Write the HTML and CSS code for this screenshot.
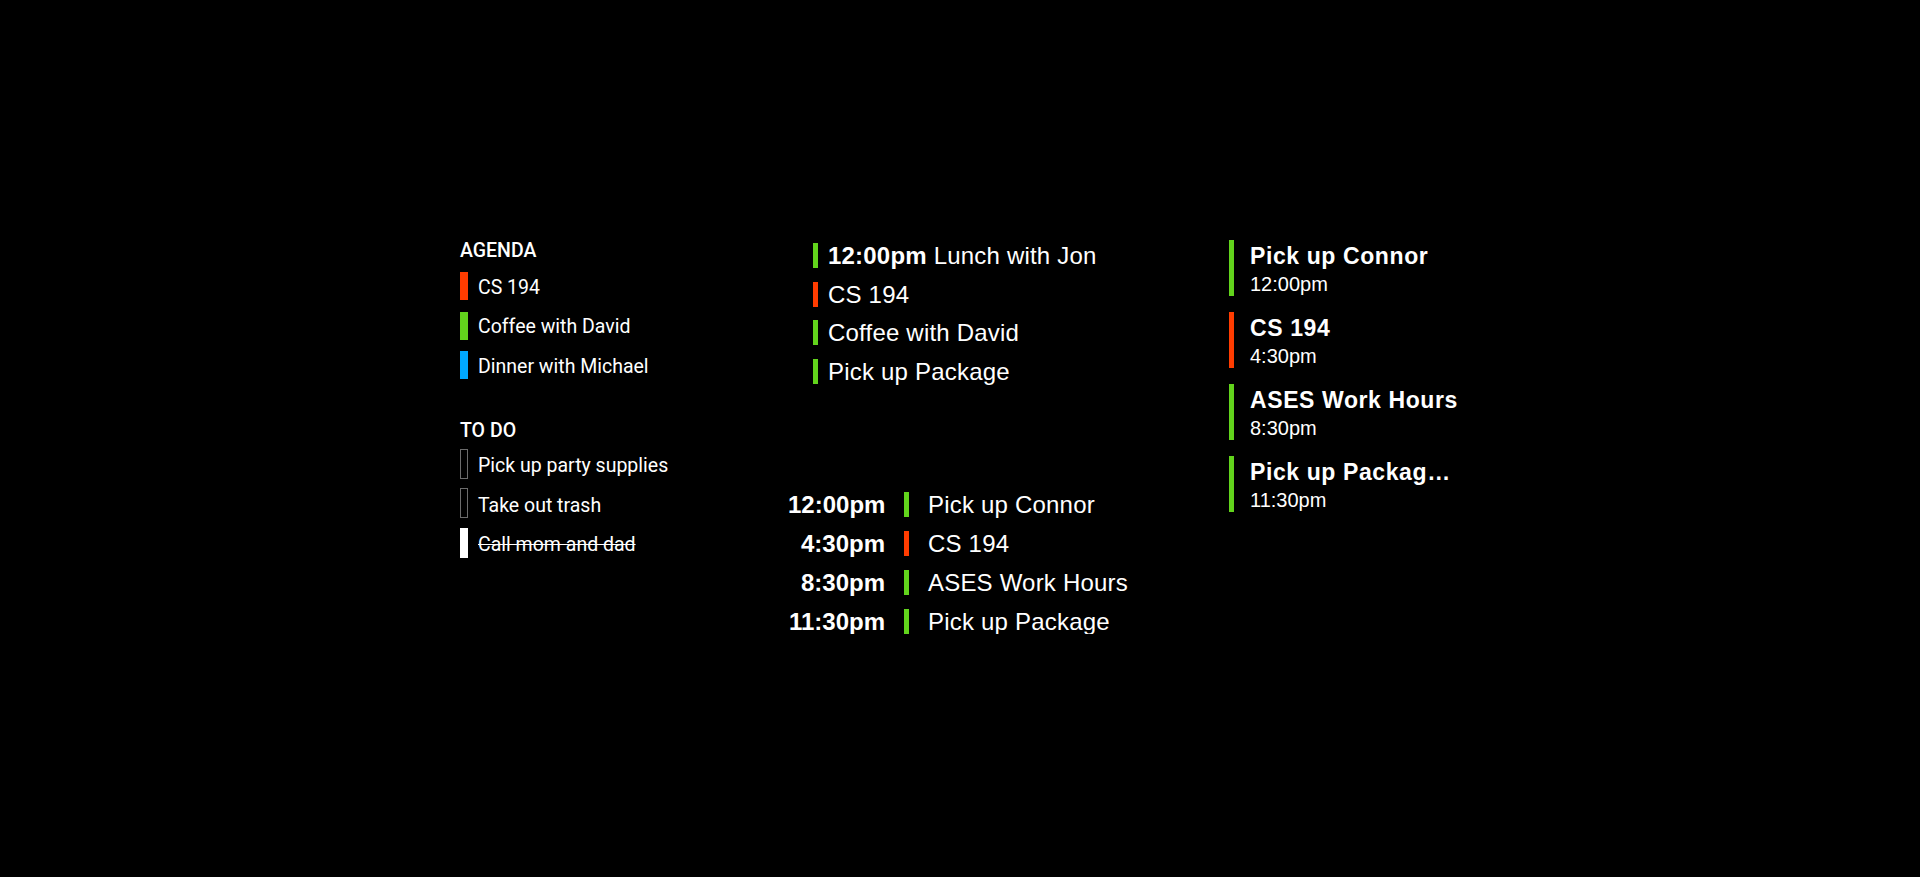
FILE: index.html
```html
<!DOCTYPE html>
<html>
	<head>
		<meta charset="utf-8">
		<link rel="stylesheet" href="styles.css">
		<title>Watch glances</title>
	</head>
	<body>
		<div class="screen">
			<div class="col col-lists">
				<h2 class="heading">AGENDA</h2>
				<ul class="list">
					<li class="item"><span class="bar red"></span><span class="label">CS 194</span></li>
					<li class="item"><span class="bar green"></span><span class="label">Coffee with David</span></li>
					<li class="item"><span class="bar blue"></span><span class="label">Dinner with Michael</span></li>
				</ul>
				<h2 class="heading todo-heading">TO DO</h2>
				<ul class="list todo">
					<li class="item"><span class="box"></span><span class="label">Pick up party supplies</span></li>
					<li class="item"><span class="box"></span><span class="label">Take out trash</span></li>
					<li class="item done"><span class="box checked"></span><span class="label">Call mom and dad</span></li>
				</ul>
			</div>
			<div class="col col-day">
				<ul class="events">
					<li class="event"><span class="tick green"></span><span><b>12:00pm</b> Lunch with Jon</span></li>
					<li class="event"><span class="tick red"></span><span>CS 194</span></li>
					<li class="event"><span class="tick green"></span><span>Coffee with David</span></li>
					<li class="event"><span class="tick green"></span><span>Pick up Package</span></li>
				</ul>
				<div class="timeline">
					<span class="time">12:00pm</span><span class="tick green"></span><span class="what">Pick up Connor</span>
					<span class="time">4:30pm</span><span class="tick red"></span><span class="what">CS 194</span>
					<span class="time">8:30pm</span><span class="tick green"></span><span class="what">ASES Work Hours</span>
					<span class="time">11:30pm</span><span class="tick green"></span><span class="what">Pick up Package</span>
				</div>
			</div>
			<div class="col col-cards">
				<div class="card">
					<span class="tick green"></span>
					<div class="card-body"><div class="card-title">Pick up Connor</div><div class="card-time">12:00pm</div></div>
				</div>
				<div class="card">
					<span class="tick red"></span>
					<div class="card-body"><div class="card-title">CS 194</div><div class="card-time">4:30pm</div></div>
				</div>
				<div class="card">
					<span class="tick green"></span>
					<div class="card-body"><div class="card-title">ASES Work Hours</div><div class="card-time">8:30pm</div></div>
				</div>
				<div class="card">
					<span class="tick green"></span>
					<div class="card-body"><div class="card-title">Pick up Packag…</div><div class="card-time">11:30pm</div></div>
				</div>
			</div>
		</div>
	</body>
</html>
```
FILE: styles.css
```css
body { margin:0; background:#000; color:#fff; }
ul { list-style:none; margin:0; padding:0; }

.screen { display:flex; padding:240px 0 0 460px; }

.red { background:#ff3c00; }
.green { background:#62d41c; }
.blue { background:#00a8ff; }

/* agenda + todo */
.col-lists { width:328px; font-family:Roboto, "Noto Sans", sans-serif; }
.heading { margin:0 0 10px; font-size:19.5px; font-weight:500; line-height:22px; }
.todo-heading { margin:40.5px 0 8px; }
.item { display:flex; align-items:center; height:28px; margin-bottom:11.5px; }
.bar { width:8px; height:28px; margin-right:10px; flex:none; }
.box { width:8px; height:30px; margin:-1px 10px -1px 0; box-sizing:border-box; border:1px solid #6b6b6b; flex:none; }
.box.checked { background:#fff; border-color:#fff; }
.label { font-size:19.5px; line-height:22px; padding-top:3px; }
.todo .label { padding-top:5px; }
.done .label { text-decoration:line-through; }

/* day list */
.col-day { width:441px; padding-top:3px; font-family:"Liberation Sans", Arial, sans-serif; font-size:24px; }
.events { padding-left:25px; }
.event { display:flex; align-items:center; height:25px; line-height:25px; margin-bottom:13.5px; letter-spacing:0.2px; }
.event:last-child { margin-bottom:0; }
.tick { width:5px; flex:none; }
.event .tick { height:25px; margin-right:10px; }

.timeline { display:grid; grid-template-columns:97px 5px auto; grid-auto-rows:25px; column-gap:19px; row-gap:14.3px; align-items:center; margin-top:108px; line-height:25px; }
.timeline .tick { height:25px; }
.time { font-weight:bold; text-align:right; }
.what { letter-spacing:0.2px; }

/* cards */
.col-cards { width:210px; font-family:"Liberation Sans", Arial, sans-serif; }
.card { display:flex; height:56px; margin-bottom:16px; }
.card .tick { height:56px; margin-right:16px; }
.card-body { white-space:nowrap; padding-top:2px; }
.card-title { font-size:23px; font-weight:bold; letter-spacing:0.6px; line-height:29px; }
.card-time { font-size:20px; line-height:27px; }
```
